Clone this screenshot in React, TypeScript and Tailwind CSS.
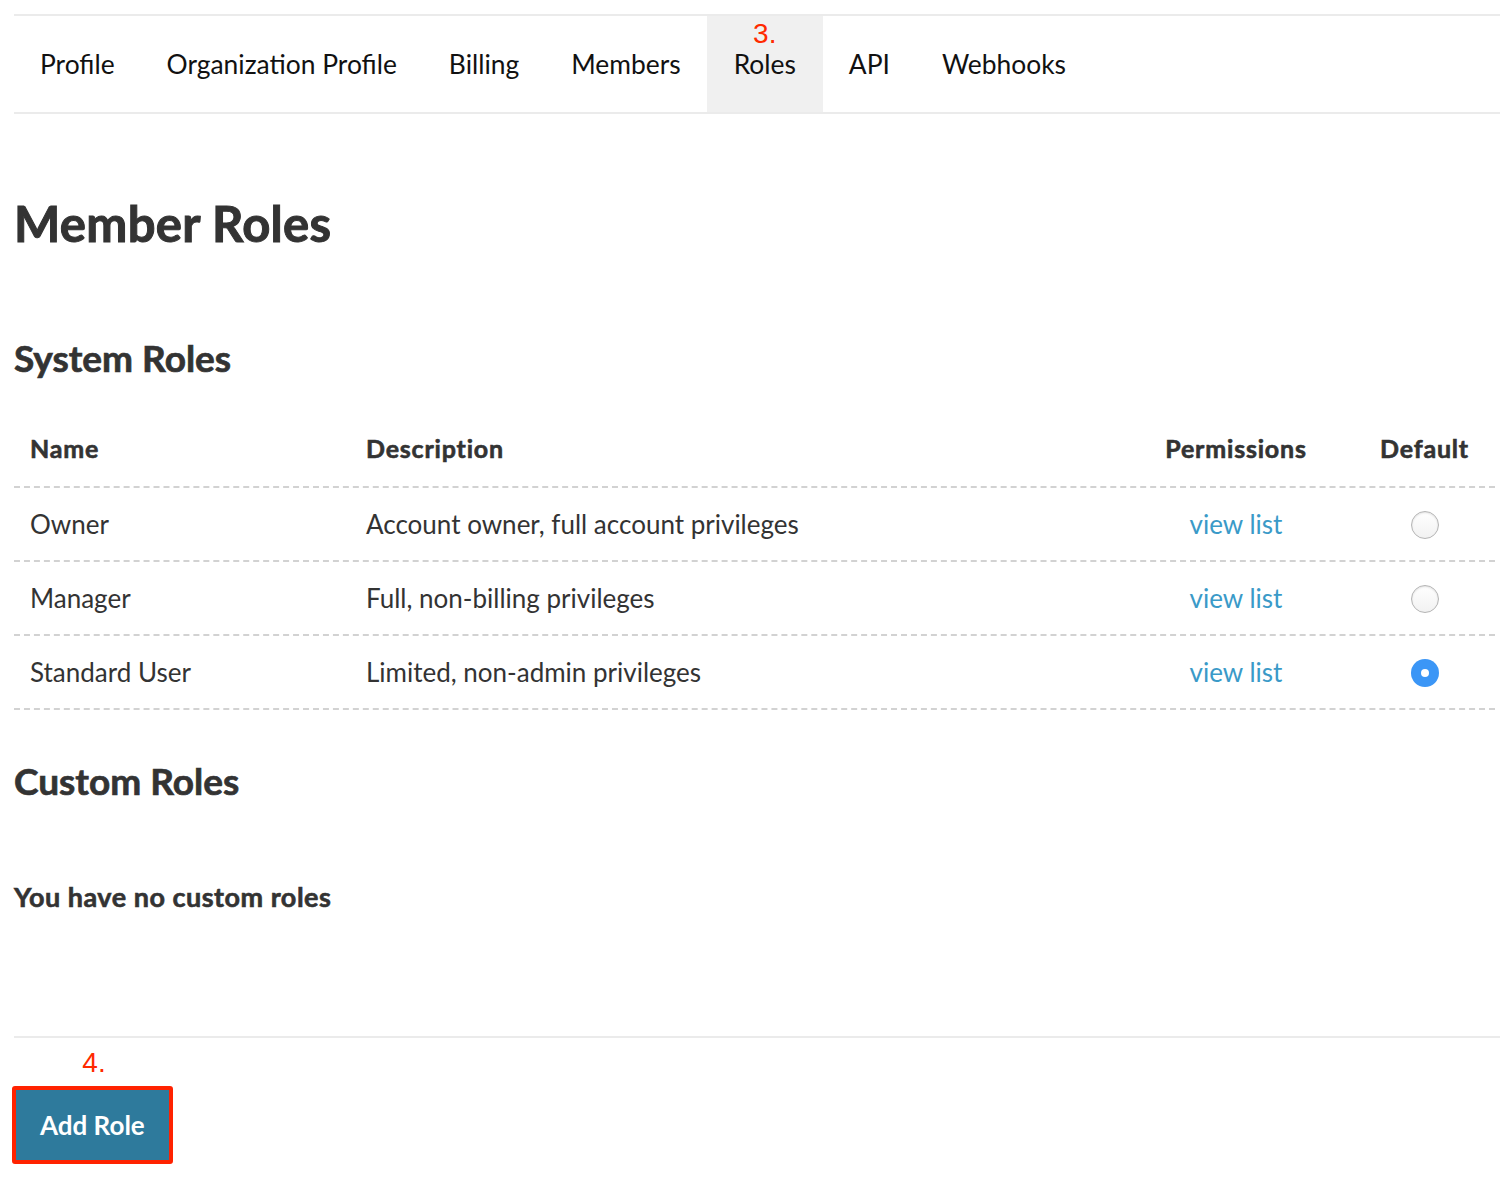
import React from "react";

const tabs = ["Profile", "Organization Profile", "Billing", "Members", "Roles", "API", "Webhooks"];

const rows = [
  { name: "Owner", desc: "Account owner, full account privileges", def: false },
  { name: "Manager", desc: "Full, non-billing privileges", def: false },
  { name: "Standard User", desc: "Limited, non-admin privileges", def: true },
];

function Radio({ checked }: { checked: boolean }) {
  if (checked) {
    return (
      <span className="inline-flex w-[28px] h-[28px] rounded-full bg-[#3b96f6] items-center justify-center">
        <span className="w-[8px] h-[8px] rounded-full bg-white" />
      </span>
    );
  }
  return (
    <span className="inline-block w-[28px] h-[28px] rounded-full border border-[#b5b5b5] bg-gradient-to-b from-white to-[#f2f2f2] shadow-[inset_0_1px_2px_rgba(0,0,0,0.12)]" />
  );
}

export default function App() {
  return (
    <div className="bg-white min-h-[1180px] w-[1500px] pl-[14px] pt-[14px] font-['Lato','Noto_Sans',sans-serif] text-[#333]">
      {/* Tabs */}
      <nav className="flex border-t-2 border-b-2 border-[#ebebeb] h-[100px]">
        {tabs.map((t) => {
          const active = t === "Roles";
          return (
            <div
              key={t}
              className={`relative flex items-center pt-[2px] px-[26px] text-[26.4px] text-[#111] ${active ? "bg-[#f0f0f0] px-[27px]" : ""}`}
            >
              {active && (
                <span className="absolute top-[1px] left-0 right-0 text-center text-[28px] leading-[34px] text-[#ff2a00] font-['Liberation_Sans',sans-serif]">
                  3.
                </span>
              )}
              {t}
            </div>
          );
        })}
      </nav>

      <h1 className="mt-[80px] text-[49px] leading-[58px] font-bold tracking-[0.3px] [-webkit-text-stroke:1px_#333]">
        Member Roles
      </h1>

      <h2 className="mt-[84px] text-[37px] leading-[44px] font-bold [-webkit-text-stroke:0.7px_#333]">
        System Roles
      </h2>

      <div className="mt-[32px] w-[1481px] text-[26px]">
        <div className="flex h-[76px] items-center pb-[1px] border-b-2 border-dashed border-[#d2d2d2] font-bold text-[25px] tracking-[0.8px] [-webkit-text-stroke:0.6px_#333]">
          <div className="w-[336px] pl-[16px]">Name</div>
          <div className="w-[798px] pl-[16px]">Description</div>
          <div className="w-[176px] text-center">Permissions</div>
          <div className="w-[171px] pl-[30px] text-center">Default</div>
        </div>
        {rows.map((r) => (
          <div key={r.name} className="flex h-[74px] items-center pt-[1px] border-b-2 border-dashed border-[#d2d2d2]">
            <div className="w-[336px] pl-[16px]">{r.name}</div>
            <div className="w-[798px] pl-[16px]">{r.desc}</div>
            <div className="w-[176px] text-center">
              <a className="text-[#3a9ac8] cursor-pointer">view list</a>
            </div>
            <div className="w-[171px] pl-[30px] flex justify-center">
              <Radio checked={r.def} />
            </div>
          </div>
        ))}
      </div>

      <h2 className="mt-[49px] text-[37px] leading-[44px] font-bold [-webkit-text-stroke:0.7px_#333]">
        Custom Roles
      </h2>

      <p className="mt-[78px] text-[27px] leading-[32px] font-bold tracking-[0.5px] [-webkit-text-stroke:0.6px_#333]">
        You have no custom roles
      </p>

      <div className="mt-[123px] border-t-2 border-[#ebebeb]" />

      <div className="w-[160px] text-center pt-[8px]">
        <span className="text-[28px] leading-[34px] text-[#ff2a00] font-['Liberation_Sans',sans-serif]">4.</span>
      </div>

      <div className="ml-[-2px] mt-[6px] inline-block border-[4px] border-[#ff2200] rounded-[3px]">
        <button className="h-[70px] px-[24px] bg-[#2e7a9c] text-white text-[26px] font-bold">
          Add Role
        </button>
      </div>
    </div>
  );
}
